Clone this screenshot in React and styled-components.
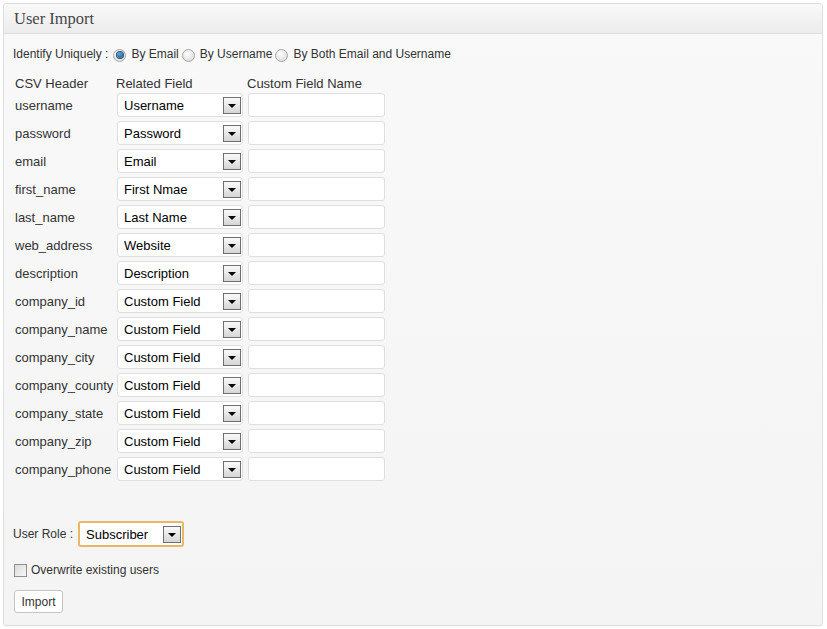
import React from 'react';
import styled, { createGlobalStyle } from 'styled-components';

const GlobalStyle = createGlobalStyle`
  html, body {
    margin: 0;
    padding: 0;
    background: #ffffff;
  }
  body {
    font-family: "Liberation Sans", Arial, sans-serif;
    color: #333333;
  }
`;

const Page = styled.div`
  padding: 3px;
  width: 820px;
`;

const Panel = styled.div`
  border: 1px solid #dfdfdf;
  border-radius: 3px;
  background: linear-gradient(#f9f9f9, #f4f4f4);
  box-shadow: 0 1px 1px rgba(0, 0, 0, 0.04);
`;

const PanelHeader = styled.div`
  height: 29px;
  border-bottom: 1px solid #dfdfdf;
  background: linear-gradient(#f9f9f9, #ececec);
  display: flex;
  align-items: center;
  padding-left: 10px;
  border-radius: 3px 3px 0 0;
`;

const Title = styled.h3`
  margin: 0;
  font-family: "Liberation Serif", "Times New Roman", serif;
  font-weight: normal;
  font-size: 16.5px;
  color: #464646;
`;

const Body = styled.div`
  padding: 12px 9px 12px 9px;
`;

const IdentifyRow = styled.div`
  display: flex;
  align-items: center;
  height: 16px;
  font-size: 12px;
  gap: 3px;

  & > span:first-child {
    margin-right: 2px;
  }
`;

const RadioLabel = styled.label`
  display: flex;
  align-items: center;
  gap: 5px;
`;

const Radio = styled.span`
  width: 11px;
  height: 11px;
  border-radius: 50%;
  border: 1px solid #a6a6a6;
  background: radial-gradient(circle at 40% 35%, #ffffff, #d4d4d4);
  display: inline-flex;
  align-items: center;
  justify-content: center;
  margin-top: 2px;

  &::after {
    content: '';
    display: ${p => (p.$checked ? 'block' : 'none')};
    width: 6px;
    height: 6px;
    border-radius: 50%;
    background: radial-gradient(circle at 40% 35%, #5aa6e0, #10508f);
    box-shadow: 0 0 0 1px #2a4f6e;
  }
`;

const TableHead = styled.div`
  display: grid;
  grid-template-columns: 101px 131px 140px;
  margin: 14px 0 1px 2px;
  font-size: 13px;
  line-height: 16px;
`;

const FieldGrid = styled.div`
  display: grid;
  grid-template-columns: 102px 131px 137px;
  row-gap: 4px;
  margin-left: 2px;
  grid-auto-rows: 24px;
  align-items: center;
`;

const CellLabel = styled.div`
  font-size: 13px;
  white-space: nowrap;
  padding-top: 1px;
`;

const SelectBox = styled.div`
  box-sizing: border-box;
  height: ${p => (p.$focus ? '26px' : '24px')};
  width: ${p => p.$width || '126px'};
  border: ${p => (p.$focus ? '2px solid #e8b865' : '1px solid #dfdfdf')};
  border-radius: 3px;
  background: #ffffff;
  display: flex;
  align-items: center;
  justify-content: space-between;
  padding: 0 1px 0 6px;
  font-size: 13px;
  color: #000000;
`;

const Arrow = styled.span`
  box-sizing: border-box;
  width: 18px;
  height: 17px;
  border: 1px solid #6f6f6f;
  background: linear-gradient(#fafafa, #d6d6d6);
  display: flex;
  align-items: center;
  justify-content: center;
  padding-top: 1px;

  &::after {
    content: '';
    border-left: 4px solid transparent;
    border-right: 4px solid transparent;
    border-top: 4px solid #000000;
  }
`;

const TextInput = styled.div`
  box-sizing: border-box;
  height: 24px;
  border: 1px solid #dfdfdf;
  border-radius: 3px;
  background: #ffffff;
`;

const RoleRow = styled.div`
  display: flex;
  align-items: center;
  gap: 5px;
  margin-top: 40px;
  font-size: 12px;
`;

const CheckRow = styled.label`
  display: flex;
  align-items: center;
  gap: 4px;
  margin: 16px 0 0 1px;
  font-size: 12px;
  height: 13px;
`;

const CheckBox = styled.span`
  box-sizing: border-box;
  width: 13px;
  height: 13px;
  border: 1px solid #8f8f8f;
  background: linear-gradient(135deg, #dcdcdc, #f6f6f6);
  margin-top: 2px;
`;

const Button = styled.button`
  margin: 14px 0 0 1px;
  height: 23px;
  width: 49px;
  padding: 0;
  border: 1px solid #c4c4c4;
  border-radius: 3px;
  background: #ffffff;
  font-family: "Liberation Sans", Arial, sans-serif;
  font-size: 12px;
  color: #333333;
  display: block;
`;

const fields = [
  ['username', 'Username'],
  ['password', 'Password'],
  ['email', 'Email'],
  ['first_name', 'First Nmae'],
  ['last_name', 'Last Name'],
  ['web_address', 'Website'],
  ['description', 'Description'],
  ['company_id', 'Custom Field'],
  ['company_name', 'Custom Field'],
  ['company_city', 'Custom Field'],
  ['company_county', 'Custom Field'],
  ['company_state', 'Custom Field'],
  ['company_zip', 'Custom Field'],
  ['company_phone', 'Custom Field'],
];

const FakeSelect = ({ value, focus, width }) => (
  <SelectBox $focus={focus} $width={width}>
    <span>{value}</span>
    <Arrow />
  </SelectBox>
);

export default function App() {
  return (
    <>
      <GlobalStyle />
      <Page>
        <Panel>
          <PanelHeader>
            <Title>User Import</Title>
          </PanelHeader>
          <Body>
            <IdentifyRow>
              <span>Identify Uniquely :</span>
              <RadioLabel><Radio $checked />By Email</RadioLabel>
              <RadioLabel><Radio />By Username</RadioLabel>
              <RadioLabel><Radio />By Both Email and Username</RadioLabel>
            </IdentifyRow>

            <TableHead>
              <span>CSV Header</span>
              <span>Related Field</span>
              <span>Custom Field Name</span>
            </TableHead>
            <FieldGrid>
              {fields.map(([name, related]) => (
                <React.Fragment key={name}>
                  <CellLabel>{name}</CellLabel>
                  <FakeSelect value={related} />
                  <TextInput />
                </React.Fragment>
              ))}
            </FieldGrid>

            <RoleRow>
              <span>User Role :</span>
              <FakeSelect value="Subscriber" focus width="106px" />
            </RoleRow>

            <CheckRow>
              <CheckBox />
              <span>Overwrite existing users</span>
            </CheckRow>

            <Button>Import</Button>
          </Body>
        </Panel>
      </Page>
    </>
  );
}
